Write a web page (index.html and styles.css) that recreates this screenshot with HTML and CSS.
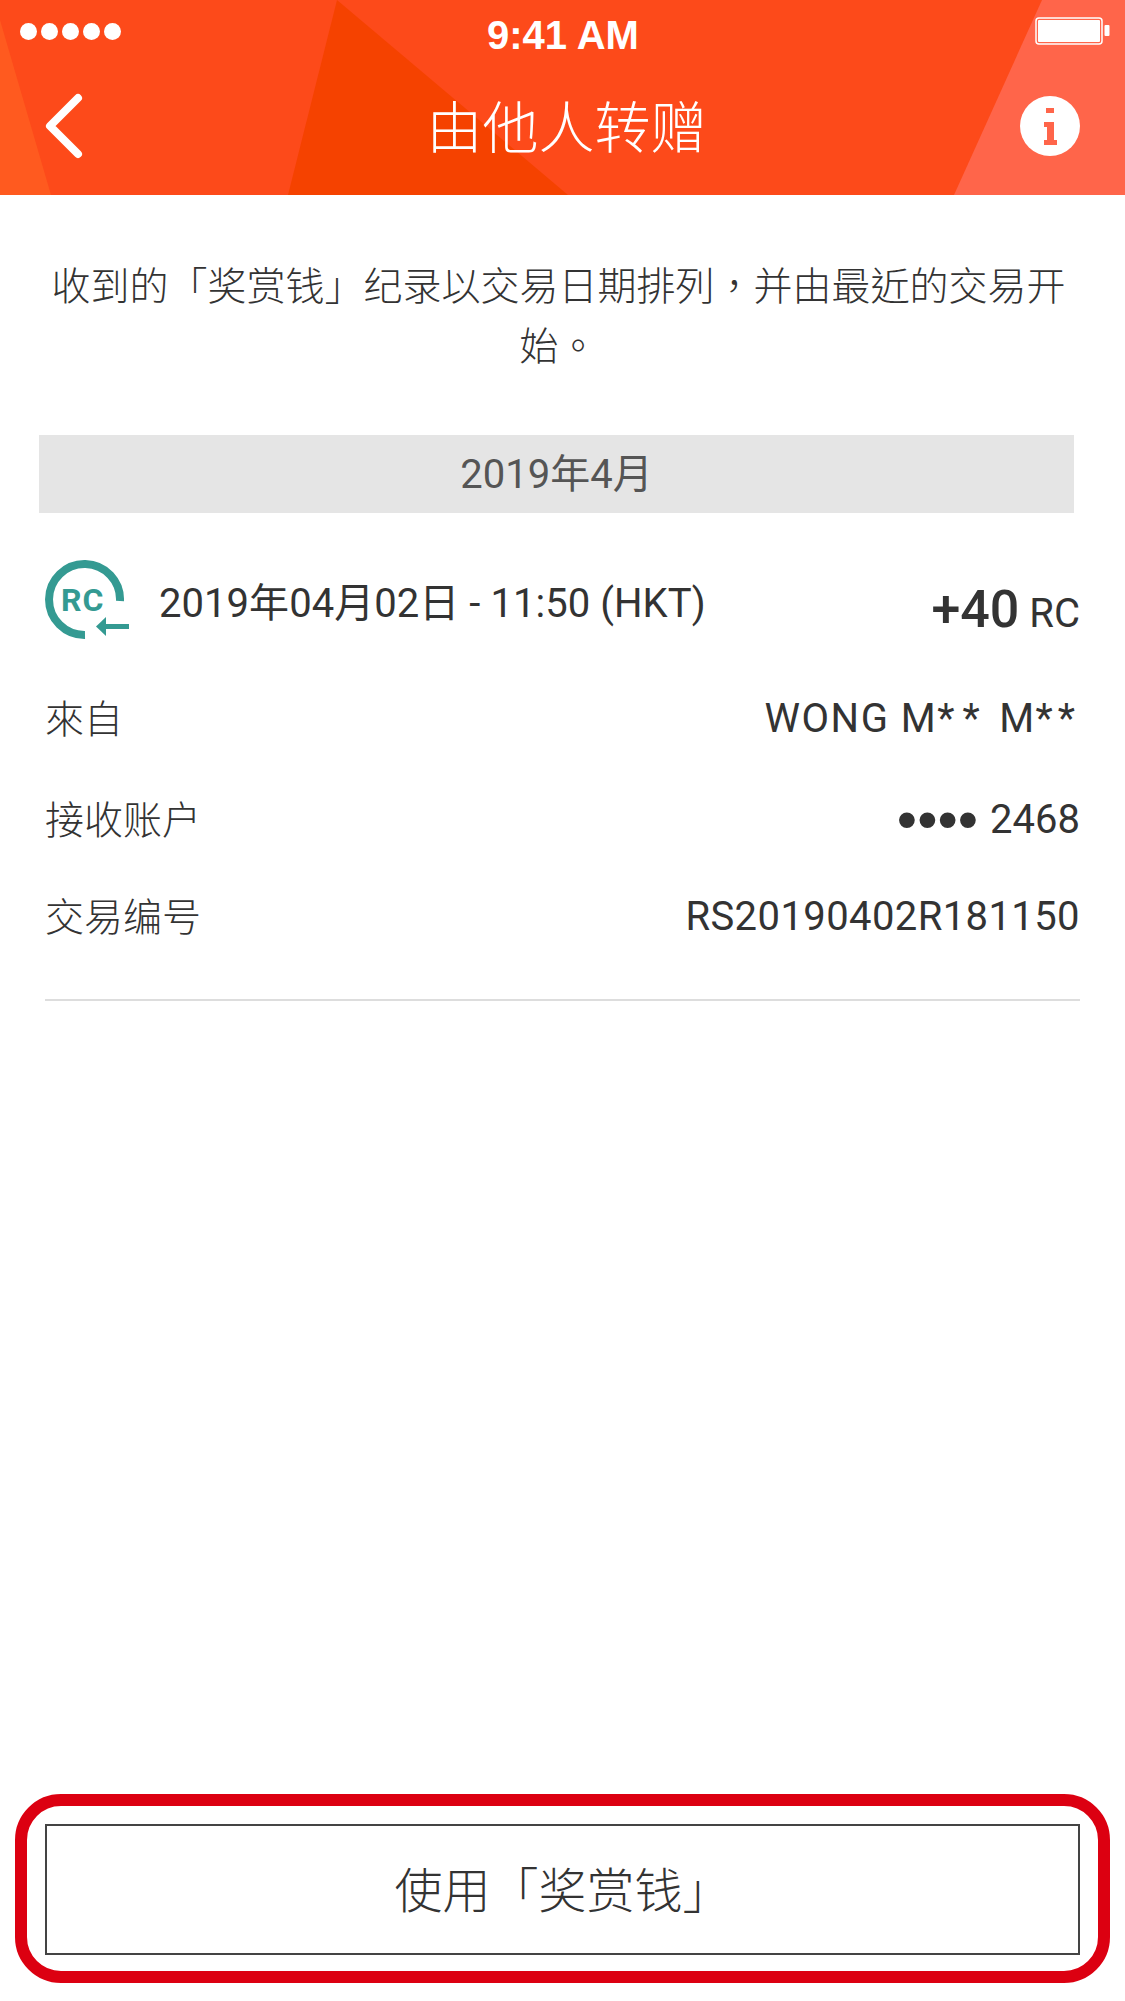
FILE: index.html
```html
<!DOCTYPE html>
<html>
<head>
  <meta charset="utf-8">
  <link rel="stylesheet" href="styles.css">
</head>
<body>

  <div class="page">
    <header class="top">
      <!-- background facets -->
      <svg class="facets" width="1125" height="195" viewBox="0 0 1125 195">
        <polygon points="0,20 51,195 0,195" fill="#ff5a1f"/>
        <polygon points="337,0 568,195 288,195" fill="#f54200"/>
        <polygon points="1042,0 1125,0 1125,195 954,195" fill="#ff654a"/>
      </svg>

      <div class="status-bar">
        <div class="dots"><span></span><span></span><span></span><span></span><span></span></div>
        <div class="clock">9:41 AM</div>
        <svg class="battery" width="75" height="28" viewBox="0 0 75 28">
          <rect x="1" y="1" width="66" height="26" rx="3" fill="none" stroke="#fff" stroke-width="1.5"/>
          <rect x="3" y="3" width="62" height="22" rx="1" fill="#fff"/>
          <rect x="69.5" y="8" width="5" height="11" rx="1" fill="#fff"/>
        </svg>
      </div>

      <div class="nav-bar">
        <svg class="back" width="40" height="66" viewBox="0 0 40 66">
          <polyline points="33,5 5,33 33,61" fill="none" stroke="#fff" stroke-width="8" stroke-linecap="round" stroke-linejoin="round"/>
        </svg>
        <h1 class="title">由他人转赠</h1>
        <svg class="info" width="60" height="60" viewBox="0 0 60 60">
          <circle cx="30" cy="30" r="30" fill="#fff"/>
          <path d="M26 12h8v5h-8zM24 26h10v18h3v5H24v-5h3V31h-3z" fill="#ff654a"/>
        </svg>
      </div>
    </header>

    <main class="content">
      <p class="intro">收到的「奖赏钱」纪录以交易日期排列，并由最近的交易开始。</p>

      <div class="month">2019年4月</div>

      <section class="record">
        <div class="record-head">
          <svg class="rc-icon" width="86" height="80" viewBox="0 0 86 80">
            <path d="M75 41A35.500 35.500 0 1 0 40 75" fill="none" stroke="#349a92" stroke-width="8"/>
            <text x="16" y="51" class="rc-text">RC</text>
            <rect x="59" y="64" width="25" height="5" fill="#349a92"/>
            <polygon points="51,66.500 61,57 61,76" fill="#349a92"/>
          </svg>
          <div class="record-date">2019年04月02日 - 11:50 (HKT)</div>
          <div class="record-amount"><b>+40</b> RC</div>
        </div>
        <div class="row row-from"><span class="label">來自</span><span class="value name">WONG M<span class="stars">**</span> M<span class="stars">**</span></span></div>
        <div class="row row-account"><span class="label">接收账户</span><span class="value masked"><span class="bullets">••••</span> 2468</span></div>
        <div class="row row-ref"><span class="label">交易编号</span><span class="value ref-no">RS20190402R181150</span></div>
      </section>
    </main>

    <footer class="bottom">
      <div class="highlight">
        <button class="use-btn">使用「奖赏钱」</button>
      </div>
    </footer>
  </div>

</body>
</html>
```

FILE: styles.css
```css
html, body { margin: 0; padding: 0; }
body { width: 1125px; height: 2001px; overflow: hidden; background: #fff; color: #333; font-family: Roboto, "Noto Sans CJK TC", sans-serif; }
.page { display: flex; flex-direction: column; height: 2001px; }

.top { position: relative; height: 195px; background: #fd4a1a; color: #fff; }
.facets { position: absolute; left: 0; top: 0; }
.status-bar { position: relative; display: flex; align-items: center; justify-content: space-between; height: 62px; padding: 0 15px 0 20px; }
.dots { display: flex; gap: 4px; width: 200px; }
.dots span { width: 17px; height: 17px; border-radius: 50%; background: #fff; }
.clock { font-family: "Liberation Sans", sans-serif; font-weight: bold; font-size: 40px; margin: 8px 4px 0 0; }
.battery { margin-left: 125px; }
.nav-bar { position: relative; display: flex; align-items: center; justify-content: space-between; height: 128px; padding: 0 45px; }
.title { margin: 6px 0 0 28px; font-size: 56px; font-weight: 300; line-height: 70px; }

.content { flex: 1; }
.intro { margin: 0; padding: 62px 49px 0 41px; font-size: 39px; font-weight: 300; line-height: 60px; text-align: center; }
.month { margin: 58px 51px 0 39px; height: 78px; line-height: 80px; background: #e5e5e5; color: #555; text-align: center; font-size: 40px; }

.record { margin: 0 45px; padding-top: 47px; height: 488px; box-sizing: border-box; border-bottom: 2px solid #ddd; }
.record-head { display: flex; align-items: center; height: 80px; }
.rc-icon { flex: none; }
.rc-text { font-size: 32px; font-weight: bold; letter-spacing: 1px; fill: #349a92; }
.record-date { margin-left: 28px; font-size: 40px; letter-spacing: 0.05px; }
.record-amount { margin-left: auto; margin-top: 18px; font-size: 40px; }
.record-amount b { font-size: 52px; font-weight: 500; }
.row { display: flex; justify-content: space-between; align-items: center; font-size: 40px; height: 50px; }
.row-from { margin-top: 51px; }
.row-account { margin-top: 51px; }
.row-ref { margin-top: 47px; }
.label { font-size: 39px; font-weight: 300; }
.value { padding-top: 4px; }
.name { letter-spacing: 1.5px; white-space: nowrap; }
.stars { letter-spacing: 8px; }
.stars:last-child { letter-spacing: 5px; }
.ref-no { letter-spacing: 0.4px; }
.masked { display: flex; align-items: center; gap: 12px; }
.bullets { font-family: "Liberation Sans", sans-serif; font-size: 58px; line-height: 50px; }

.bottom { padding: 0 15px 18px; }
.highlight { border: 12px solid #dc0011; border-radius: 46px; padding: 18px 18px 16px; }
.use-btn { display: block; width: 100%; height: 131px; padding: 0 0 6px; border: 2px solid #444; border-radius: 0; background: #fff; color: #333; font-family: inherit; font-size: 48px; font-weight: 300; }
```
